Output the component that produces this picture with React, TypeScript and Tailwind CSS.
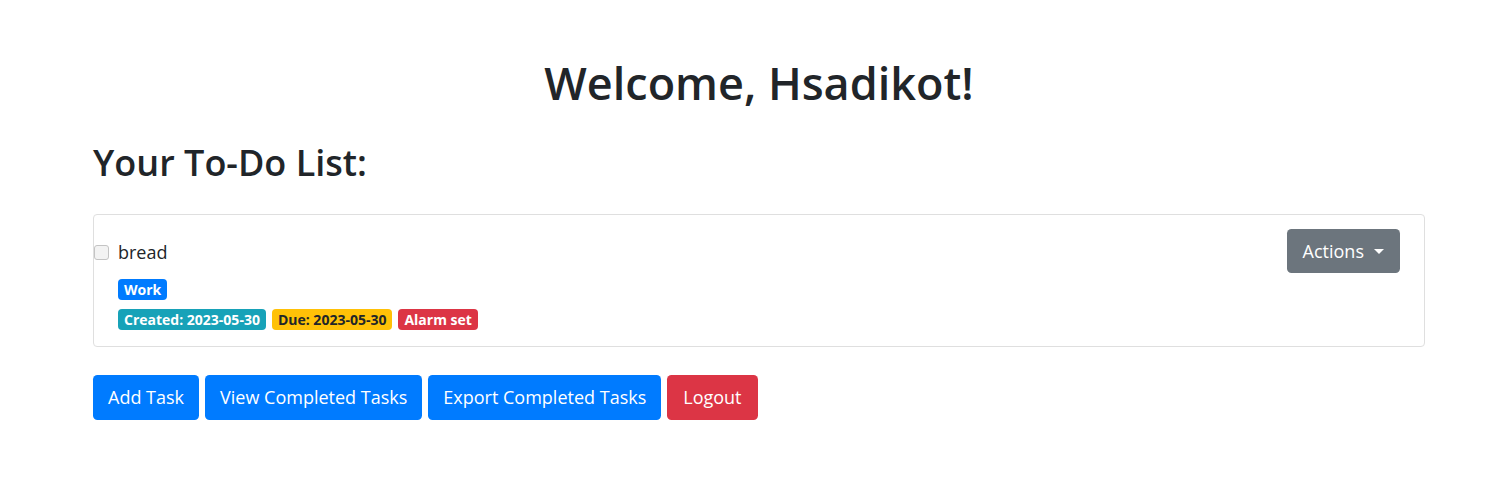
import React from 'react';

const font = { fontFamily: '"Open Sans", "Noto Sans", sans-serif' };

function Badge({ children, className }: { children: React.ReactNode; className: string }) {
  return (
    <span
      className={`inline-flex h-[21px] items-center rounded-[4px] px-[6px] text-[14px] font-bold leading-none ${className}`}
    >
      {children}
    </span>
  );
}

export default function App() {
  return (
    <div className="min-h-[490px] bg-white text-[#212529]" style={font}>
      <div className="ml-[93px] w-[1332px] pt-[56px]">
        <h1 className="text-center text-[45px] font-semibold leading-[54px]">Welcome, Hsadikot!</h1>

        <h2 className="mt-[31px] text-[36px] font-semibold leading-[44px]">Your To-Do List:</h2>

        {/* Liste úloh */}
        <div className="mt-[29px] flex items-start justify-between rounded-[4px] border border-[#dfdfdf] pb-[16px] pr-[24px] pt-[14px]">
          <div className="pt-[10px]">
            <label className="flex h-[27px] items-center text-[18px]">
              <span className="mr-[9px] h-[15px] w-[15px] rounded-[3px] border border-[#c4c4c4] bg-[#f3f3f3]" />
              bread
            </label>
            <div className="ml-[24px] mt-[13px] flex">
              <Badge className="bg-[#007bff] text-white">Work</Badge>
            </div>
            <div className="ml-[24px] mt-[9px] flex gap-[6px]">
              <Badge className="bg-[#17a2b8] text-white">Created: 2023-05-30</Badge>
              <Badge className="bg-[#ffc107] text-[#212529]">Due: 2023-05-30</Badge>
              <Badge className="bg-[#dc3545] text-white">Alarm set</Badge>
            </div>
          </div>
          <button className="flex h-[44px] items-center gap-[10px] rounded-[4.5px] bg-[#6c757d] px-[16px] text-[18px] text-white">
            Actions
            <span className="h-0 w-0 border-x-[5px] border-t-[5px] border-x-transparent border-t-white" />
          </button>
        </div>

        {/* Tlačidlá */}
        <div className="mt-[28px] flex gap-[6px]">
          <button className="h-[45px] rounded-[4.5px] bg-[#007bff] px-[15px] text-[18px] text-white">Add Task</button>
          <button className="h-[45px] rounded-[4.5px] bg-[#007bff] px-[15px] text-[18px] text-white">View Completed Tasks</button>
          <button className="h-[45px] rounded-[4.5px] bg-[#007bff] px-[15px] text-[18px] text-white">Export Completed Tasks</button>
          <button className="h-[45px] rounded-[4.5px] bg-[#dc3545] px-[16px] text-[18px] text-white">Logout</button>
        </div>
      </div>
    </div>
  );
}
